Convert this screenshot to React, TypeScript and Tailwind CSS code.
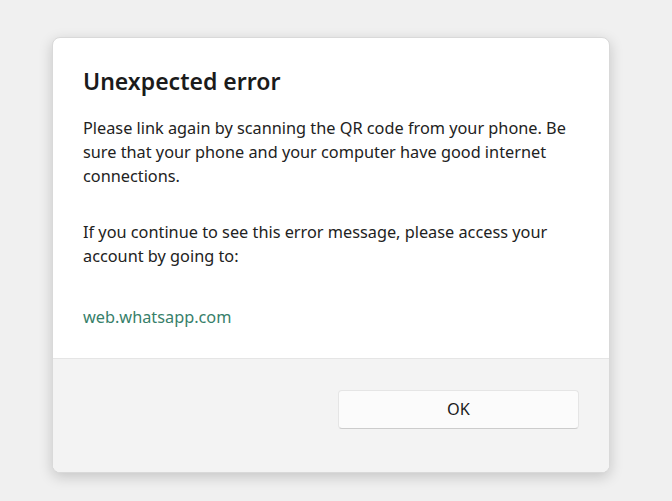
export default function App() {
  return (
    <div className="w-[672px] h-[501px] bg-[#f0f0f0] pt-[37px] pl-[52px]" style={{ fontFamily: '"Noto Sans", sans-serif' }}>
      <div className="w-[558px] h-[436px] bg-white rounded-[8px] border border-[#d9d9d9] shadow-[0_4px_14px_rgba(0,0,0,0.18)] overflow-hidden flex flex-col">
        <div className="flex-1 px-[30px] pt-[28px]">
          <h1 className="text-[23px] leading-[30px] font-semibold text-[#1b1b1b]">Unexpected error</h1>
          <p className="mt-[20px] text-[16.3px] leading-[24px] text-[#222222]">
            Please link again by scanning the QR code from your phone. Be sure that your phone and your computer have good internet connections.
          </p>
          <p className="mt-[32px] text-[16.3px] leading-[24px] text-[#222222]">
            If you continue to see this error message, please access your account by going to:
          </p>
          <p className="mt-[37px] text-[16.3px] leading-[24px] text-[#37806a]">web.whatsapp.com</p>
        </div>
        <div className="h-[114px] bg-[#f3f3f3] border-t border-[#e5e5e5] flex justify-end pr-[30px] pt-[31px]">
          <button className="w-[241px] h-[39px] rounded-[4px] bg-[#fbfbfb] border border-[#e5e5e5] border-b-[#cccccc] text-[16.3px] text-[#1b1b1b]">
            OK
          </button>
        </div>
      </div>
    </div>
  );
}
